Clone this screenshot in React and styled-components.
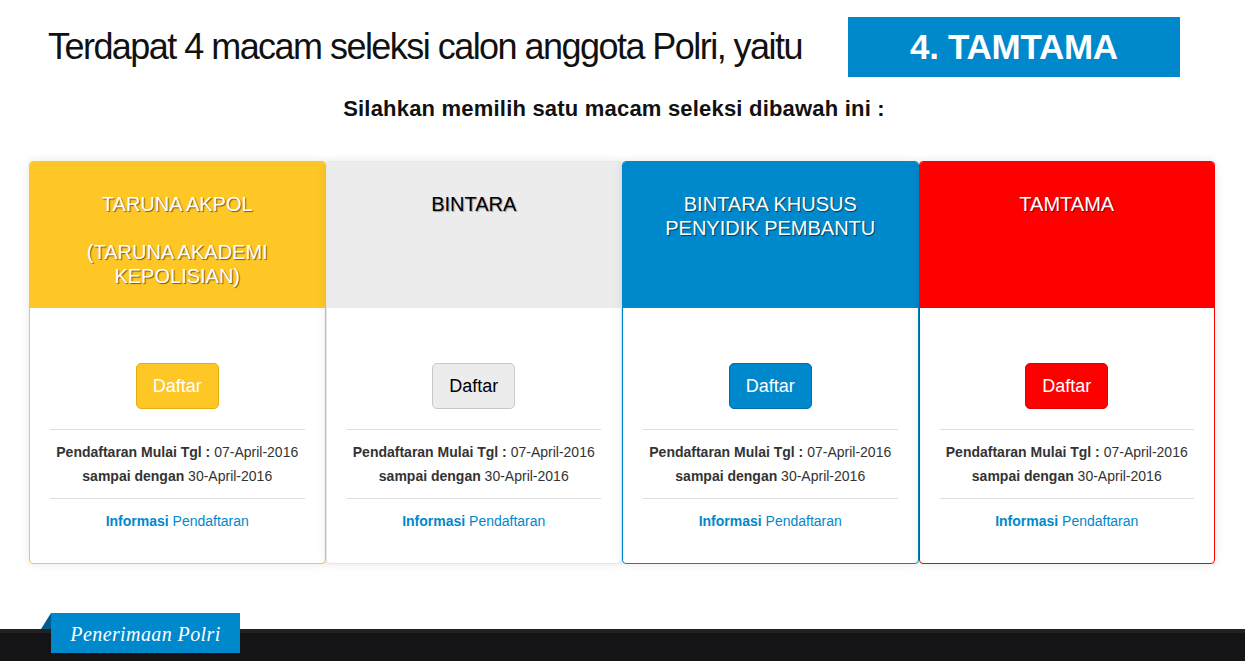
import React from "react";
import styled, { createGlobalStyle } from "styled-components";

const Global = createGlobalStyle`
  html, body { margin: 0; padding: 0; background: #fff; }
  body { font-family: "Liberation Sans", Arial, sans-serif; color: #333; }
  * { box-sizing: border-box; }
`;

const Page = styled.div`
  width: 1245px;
  height: 661px;
  overflow: hidden;
  display: flex;
  flex-direction: column;
`;

const TitleRow = styled.div`
  display: flex;
  align-items: center;
  padding: 17px 0 0 48px;
  height: 77px;
`;

const Title = styled.h1`
  margin: 0;
  font-size: 36px;
  font-weight: normal;
  color: #111;
  white-space: nowrap;
  flex-shrink: 0;
  letter-spacing: -1.54px;
`;

const Badge = styled.div`
  margin-left: 46px;
  width: 332px;
  flex-shrink: 0;
  height: 60px;
  background: #0088cc;
  color: #fff;
  font-weight: bold;
  font-size: 35px;
  display: flex;
  align-items: center;
  justify-content: center;
  letter-spacing: -0.3px;
`;

const Subtitle = styled.h2`
  margin: 19px 0 0;
  padding-right: 17px;
  text-align: center;
  font-size: 22px;
  font-weight: bold;
  color: #111;
  line-height: 26px;
  letter-spacing: 0.2px;
`;

const Cards = styled.div`
  display: grid;
  grid-template-columns: repeat(4, 1fr);
  margin: 39px 30px 0 29px;
`;

const Card = styled.div`
  border: 1px solid ${(p) => p.$border};
  border-radius: 4px;
  overflow: hidden;
  background: #fff;
  box-shadow: 0 0 10px rgba(0, 0, 0, 0.1);
  height: 403px;
`;

const CardHead = styled.div`
  background: ${(p) => p.$bg};
  color: ${(p) => p.$fg};
  height: 147px;
  padding: 31px 20px 0;
  margin: -1px -1px 0;
  text-align: center;
  font-size: 20px;
  line-height: 24px;
  letter-spacing: 0;
  text-shadow: ${(p) => p.$shadow};
`;

const CardBody = styled.div`
  padding: 55px 20px 0;
  text-align: center;
`;

const Button = styled.button`
  font-family: "Liberation Sans", Arial, sans-serif;
  font-size: 18px;
  height: 46px;
  padding: 0 16px;
  border-radius: 5px;
  border: 1px solid ${(p) => p.$border};
  background: ${(p) => p.$bg};
  color: ${(p) => p.$fg};
  cursor: pointer;
`;

const Rule = styled.hr`
  border: 0;
  border-top: 1px solid #ddd;
  margin: ${(p) => p.$m};
`;

const Dates = styled.p`
  margin: 0;
  font-size: 14px;
  line-height: 24px;
  color: #333;
  b { font-weight: bold; }
`;

const Info = styled.a`
  display: block;
  font-size: 14px;
  line-height: 22px;
  color: #0088cc;
  text-decoration: none;
  b { font-weight: bold; }
`;

const Footer = styled.div`
  position: relative;
  margin-top: auto;
  height: 32px;
  background: #141416;
  border-top: 4px solid #222224;
`;

const Tab = styled.div`
  position: absolute;
  left: 51px;
  top: -20px;
  width: 189px;
  height: 40px;
  background: #0088cc;
  color: #fff;
  font-family: "Liberation Serif", serif;
  font-style: italic;
  font-size: 20px;
  display: flex;
  align-items: center;
  justify-content: center;
  padding-top: 2px;
  letter-spacing: 0.4px;
  &::before {
    content: "";
    position: absolute;
    left: -10px;
    top: 0;
    border-style: solid;
    border-width: 0 0 16px 10px;
    border-color: transparent transparent #005e8e transparent;
  }
`;

const cards = [
  {
    title: ["TARUNA AKPOL", "", "(TARUNA AKADEMI", "KEPOLISIAN)"],
    bg: "#fec726",
    fg: "#fff",
    border: "#fec726",
    shadow: "1px 1px 1px rgba(0,0,0,0.55)",
    btn: { bg: "#fec726", border: "#e5ae10", fg: "#fff" },
  },
  {
    title: ["BINTARA"],
    bg: "#ececec",
    fg: "#000",
    border: "#e6e6e6",
    shadow: "1px 1px 1px rgba(0,0,0,0.35)",
    btn: { bg: "#ececec", border: "#c8c8c8", fg: "#000" },
  },
  {
    title: ["BINTARA KHUSUS", "PENYIDIK PEMBANTU"],
    bg: "#0088cc",
    fg: "#fff",
    border: "#0088cc",
    shadow: "1px 1px 1px rgba(0,0,0,0.55)",
    btn: { bg: "#0088cc", border: "#006fa6", fg: "#fff" },
  },
  {
    title: ["TAMTAMA"],
    bg: "#ff0000",
    fg: "#fff",
    border: "#ff0000",
    shadow: "1px 1px 1px rgba(0,0,0,0.55)",
    btn: { bg: "#ff0000", border: "#e00000", fg: "#fff" },
  },
];

export default function App() {
  return (
    <Page>
      <Global />
      <TitleRow>
        <Title>Terdapat 4 macam seleksi calon anggota Polri, yaitu</Title>
        <Badge>4. TAMTAMA</Badge>
      </TitleRow>
      <Subtitle>Silahkan memilih satu macam seleksi dibawah ini :</Subtitle>
      <Cards>
        {cards.map((c, i) => (
          <Card key={i} $border={c.border}>
            <CardHead $bg={c.bg} $fg={c.fg} $shadow={c.shadow}>
              {c.title.map((t, j) => (
                <div key={j}>{t || "\u00a0"}</div>
              ))}
            </CardHead>
            <CardBody>
              <Button $bg={c.btn.bg} $border={c.btn.border} $fg={c.btn.fg}>
                Daftar
              </Button>
              <Rule $m="20px 0 10px" />
              <Dates>
                <b>Pendaftaran Mulai Tgl :</b> 07-April-2016
                <br />
                <b>sampai dengan</b> 30-April-2016
              </Dates>
              <Rule $m="10px 0 11px" />
              <Info href="#">
                <b>Informasi</b> Pendaftaran
              </Info>
            </CardBody>
          </Card>
        ))}
      </Cards>
      <Footer>
        <Tab>Penerimaan Polri</Tab>
      </Footer>
    </Page>
  );
}
